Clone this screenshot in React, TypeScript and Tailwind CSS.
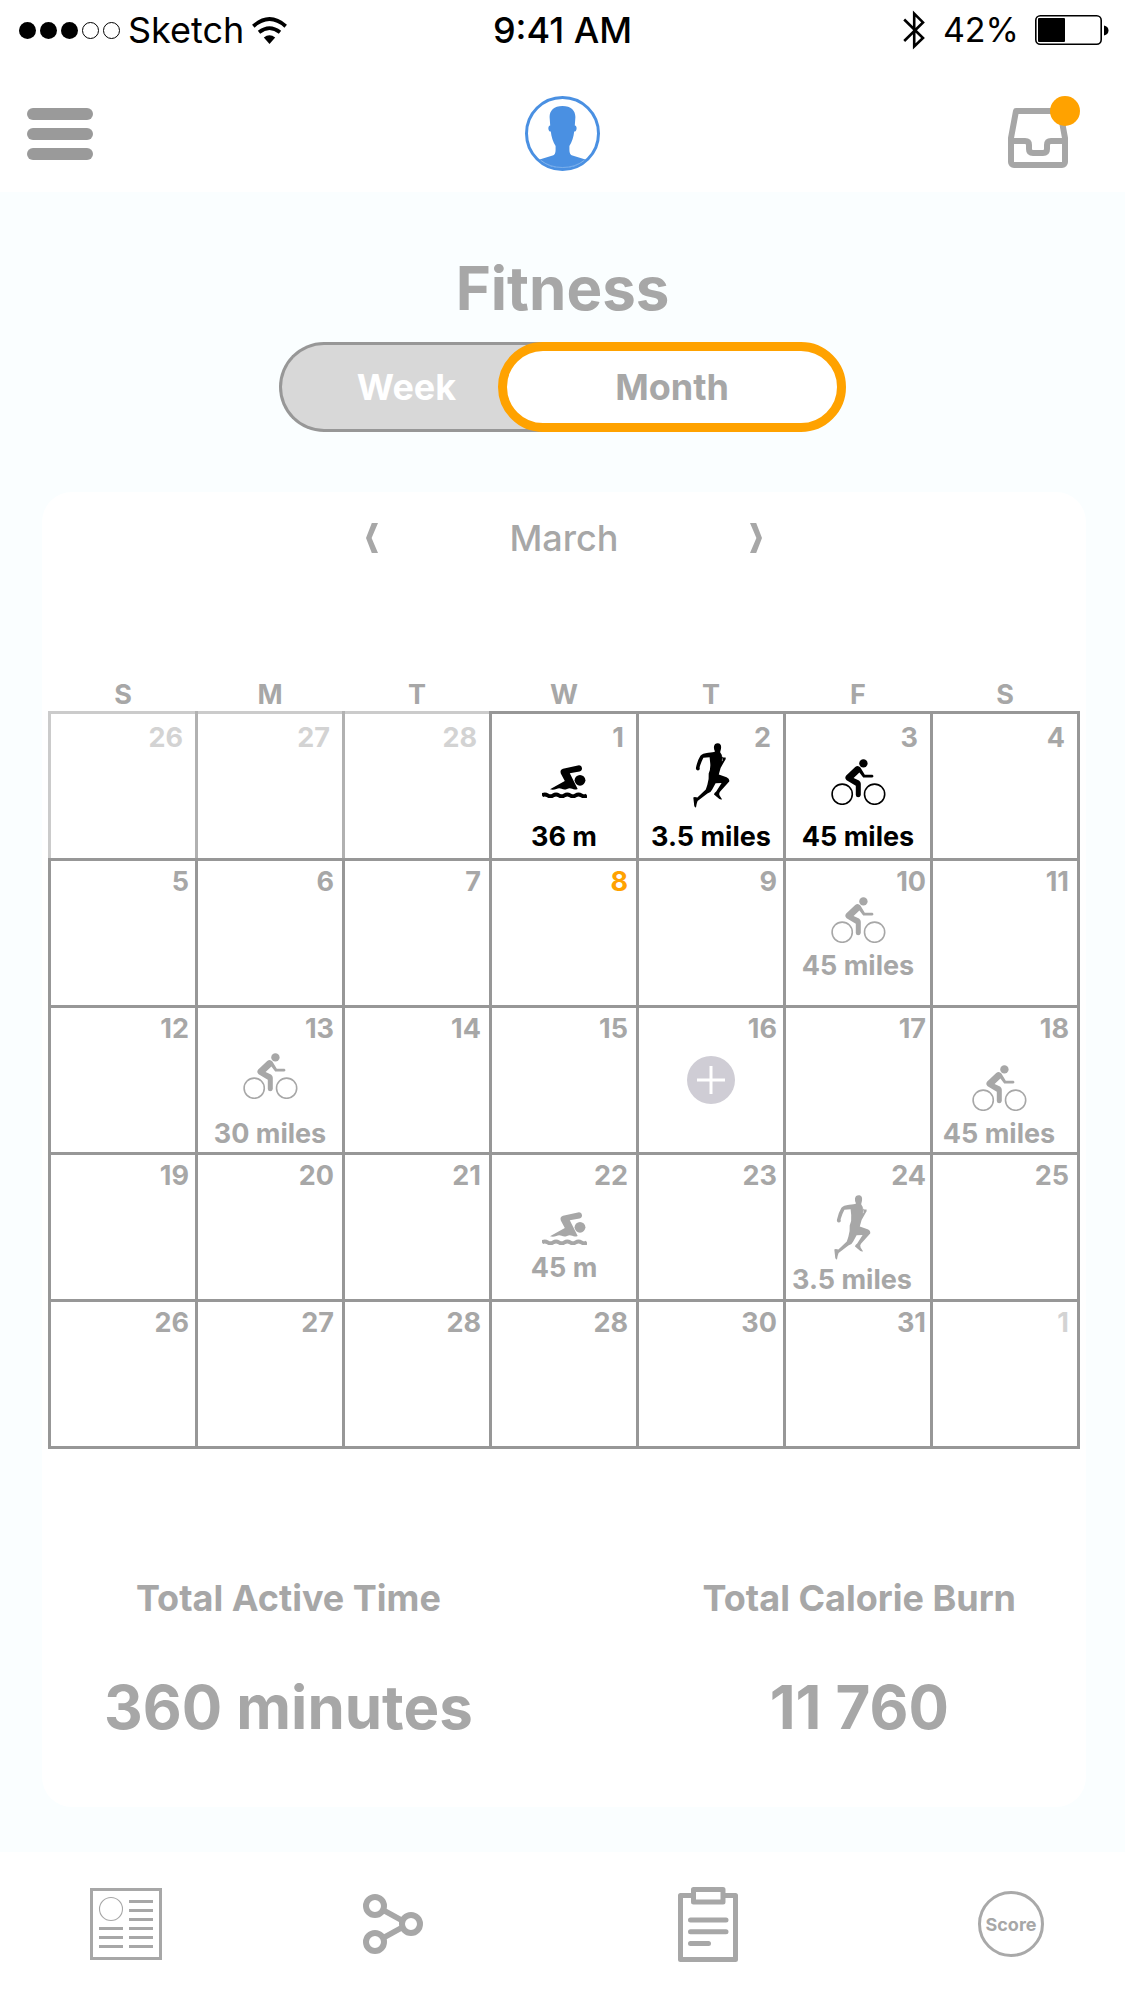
import type { ReactNode } from "react";

type Kind = "swim" | "run" | "bike";

type Activity = {
  kind: Kind;
  label: string;
  /** Space above the icon, between icon and label, and beside them. */
  spacing: string;
  done?: boolean;
};

type Day = {
  day: number;
  outside?: boolean;
  today?: boolean;
  add?: boolean;
  activity?: Activity;
};

const WEEKDAYS: [string, string][] = [
  ["Sunday", "S"],
  ["Monday", "M"],
  ["Tuesday", "T"],
  ["Wednesday", "W"],
  ["Thursday", "T"],
  ["Friday", "F"],
  ["Saturday", "S"],
];

const WEEKS: Day[][] = [
  [
    { day: 26, outside: true },
    { day: 27, outside: true },
    { day: 28, outside: true },
    { day: 1, activity: { kind: "swim", label: "36 m", done: true, spacing: "pt-[51px] gap-[23px]" } },
    { day: 2, activity: { kind: "run", label: "3.5 miles", done: true, spacing: "pt-[29px] gap-[13px]" } },
    { day: 3, activity: { kind: "bike", label: "45 miles", done: true, spacing: "pt-[45px] gap-4" } },
    { day: 4 },
  ],
  [
    { day: 5 },
    { day: 6 },
    { day: 7 },
    { day: 8, today: true },
    { day: 9 },
    { day: 10, activity: { kind: "bike", label: "45 miles", spacing: "pt-9 gap-[7px]" } },
    { day: 11 },
  ],
  [
    { day: 12 },
    { day: 13, activity: { kind: "bike", label: "30 miles", spacing: "pt-[45px] gap-[19px]" } },
    { day: 14 },
    { day: 15 },
    { day: 16, add: true },
    { day: 17 },
    { day: 18, activity: { kind: "bike", label: "45 miles", spacing: "pt-[57px] gap-[7px] pr-3" } },
  ],
  [
    { day: 19 },
    { day: 20 },
    { day: 21 },
    { day: 22, activity: { kind: "swim", label: "45 m", spacing: "pt-[57px] gap-[7px]" } },
    { day: 23 },
    { day: 24, activity: { kind: "run", label: "3.5 miles", spacing: "pt-10 gap-1 pr-3" } },
    { day: 25 },
  ],
  [
    { day: 26 },
    { day: 27 },
    { day: 28 },
    { day: 28 },
    { day: 30 },
    { day: 31 },
    { day: 1, outside: true },
  ],
];

/* Right padding of the day numbers, by column. */
const NUMBER_PADDING = ["pr-1.5", "pr-2", "pr-2", "pr-2", "pr-1.5", "pr-1", "pr-2"];

function SwimIcon() {
  return (
    <svg width="45" height="33" viewBox="0 0 45 33" fill="currentColor" aria-hidden="true">
      <path d="M8 24.2 L22.8 16 L18.8 8.5 Q17.6 4.6 21 3.7 L37 .3 Q39.6 .2 40 3 Q40.2 5.8 37.6 6.4 L27.8 8.2 L35.7 24 Q32.5 25.2 30.2 23.8 Q27.6 22.6 25 24 Q22.2 25.2 19.6 23.8 Q17 22.6 14.4 24 Q11 25.2 8 24.2Z" />
      <circle cx="38" cy="15.3" r="5.4" />
      <path
        d="M0 30.4 q2.8-1.8 5.62 0 q2.8 1.8 5.62 0 q2.8-1.8 5.62 0 q2.8 1.8 5.62 0 q2.8-1.8 5.62 0 q2.8 1.8 5.62 0 q2.8-1.8 5.62 0 q2.8 1.8 5.62 0"
        fill="none"
        stroke="currentColor"
        strokeWidth="4"
      />
    </svg>
  );
}

function RunIcon() {
  return (
    <svg width="37" height="65" viewBox="0 0 37 65" fill="currentColor" aria-hidden="true">
      <path d="M24.6 .3 C28 .3 28.4 3 28 5.6 C27.7 7.6 27 9 27.3 9.6 Q29.2 11.4 29 15.6 L28.9 18.4 L29.6 17.4 L29 13.6 L30.4 14.4 L32.6 14.4 Q33.2 16.2 31.4 18.2 L27.6 25 L25.8 31.6 L33.6 34.2 Q36.8 35.8 36.2 38.4 L27.2 48.6 Q25.6 50.4 26.6 52.4 L29 56.2 Q27 57 24.6 54.4 L21 51.6 Q21 50 23.2 48.4 L28.6 40 L22.6 40.2 L19.2 46.4 Q18 49.4 14.4 50.6 L4.6 58 Q3.4 61 3 64.4 Q1 64.2 1 60.4 L.3 54.4 Q1.4 53.4 4.4 54.4 L12.8 46.4 Q14.6 42 15.6 36 L15.7 30.6 Q17.8 26 17.2 20 L16.6 14.2 L10.4 14.8 Q8.2 19 6.6 24.2 Q7.4 27.4 4.8 27.6 Q2.4 27 3 24.4 Q4.6 17.4 7.4 12.8 Q9.4 10.4 15.2 9.8 Q20.4 9.6 22 8.6 Q20.6 5.6 21 3.4 Q21.6 .3 24.6 .3Z" />
    </svg>
  );
}

function BikeIcon() {
  return (
    <svg width="55" height="46" viewBox="0 0 55 46" fill="currentColor" aria-hidden="true">
      <circle cx="11.2" cy="35.2" r="10.1" fill="none" stroke="currentColor" strokeWidth="1.6" />
      <circle cx="43.6" cy="35.2" r="10.1" fill="none" stroke="currentColor" strokeWidth="1.6" />
      <circle cx="32.4" cy="4.4" r="4.2" />
      <path d="M24.2 8 Q27 5.6 29.4 8.6 L33.8 15.8 H41.4 Q43.6 17.2 41.4 18.6 H32.2 L28.4 13.6 L22.6 19 L28 21.6 Q29.8 22.8 29.8 24.8 V36 Q29.4 38.2 27.2 38.2 Q25 38.2 24.8 36 V26.8 L15.6 21.2 Q13.2 18.8 15.2 16.4Z" />
    </svg>
  );
}

function ActivityIcon({ kind }: { kind: Kind }) {
  if (kind === "swim") return <SwimIcon />;
  if (kind === "run") return <RunIcon />;
  return <BikeIcon />;
}

function StatusBar() {
  return (
    <div className="grid h-[60px] grid-cols-[1fr_auto_1fr] items-center text-[36px] leading-[60px] text-black">
      <div className="flex items-center pl-[19px]">
        <span className="mr-2 flex gap-1" role="img" aria-label="Signal: 3 of 5">
          <span className="size-[17px] rounded-full bg-black" />
          <span className="size-[17px] rounded-full bg-black" />
          <span className="size-[17px] rounded-full bg-black" />
          <span className="size-[17px] rounded-full border border-black" />
          <span className="size-[17px] rounded-full border border-black" />
        </span>
        <span>Sketch</span>
        <svg className="ml-2" width="35" height="27" viewBox="0 0 35 27" fill="none" stroke="currentColor" strokeWidth="3.8" aria-hidden="true">
          <path d="M1.3 9.2 Q17.5 -5 33.7 9.2" />
          <path d="M7 15.2 Q17.5 7 28 15.2" />
          <path d="M11.8 20.6 Q17.5 16 23.2 20.6 L17.5 27Z" fill="currentColor" stroke="none" />
        </svg>
      </div>
      <span className="font-medium">9:41 AM</span>
      <div className="flex items-center justify-end pr-4">
        <svg className="mr-[18px]" width="22" height="40" viewBox="0 0 22 40" fill="none" stroke="currentColor" strokeWidth="2.6" aria-hidden="true">
          <path d="M1.2 9.5 L20 28 L11.2 36.4 V3.6 L20 12.4 L1.2 31" />
        </svg>
        <span className="text-[34px]">42%</span>
        <svg className="ml-4" width="74" height="30" viewBox="0 0 74 30" aria-hidden="true">
          <rect x=".8" y=".8" width="65.4" height="28.4" rx="4.5" fill="none" stroke="currentColor" strokeWidth="1.6" />
          <rect x="3" y="3" width="27" height="24" rx="1" fill="currentColor" />
          <path d="M69 10.5 Q73.5 11.5 73.5 15.5 Q73.5 19.5 69 20.5Z" fill="currentColor" />
        </svg>
      </div>
    </div>
  );
}

function TopBar() {
  return (
    <div className="grid grid-cols-[1fr_auto_1fr] items-center pt-9 pb-[21px]">
      <button type="button" aria-label="Menu" className="ml-[27px] flex w-[66px] flex-col gap-2">
        <span className="h-3 rounded-full bg-[#9a9a9a]" />
        <span className="h-3 rounded-full bg-[#9a9a9a]" />
        <span className="h-3 rounded-full bg-[#9a9a9a]" />
      </button>
      <button type="button" aria-label="Profile">
        <svg width="75" height="75" viewBox="0 0 75 75" aria-hidden="true">
          <circle cx="37.5" cy="37.5" r="36" fill="#fff" stroke="#4a90e2" strokeWidth="3" />
          <path
            d="M37.5 10 C29 10 24.6 14.6 24.6 21 L25.2 29.4 C22.6 29.4 22.8 35.6 25.8 35.6 C26.4 41 28 46 30.6 50 V54 C30.6 57 29.6 59 27.6 59.6 L14.6 63.4 Q24 72.5 37.5 72.5 Q51 72.5 60.4 63.4 L47.4 59.6 C45.4 59 44.4 57 44.4 54 V50 C47 46 48.6 41 49.2 35.6 C52.2 35.6 52.4 29.4 49.8 29.4 L50.4 21 C50.4 14.6 46 10 37.5 10Z"
            fill="#4a90e2"
          />
          <path d="M16 64.5 Q25 71.5 37.5 71.5 Q50 71.5 59 64.5" fill="none" stroke="#8fbbee" strokeWidth=".7" />
        </svg>
      </button>
      <button type="button" aria-label="Inbox, new items" className="mr-[45px] justify-self-end">
        <svg width="72" height="75" viewBox="0 -12 72 75" aria-hidden="true">
          <g fill="none" stroke="#a6a6a6" strokeWidth="6" strokeLinejoin="round">
            <path d="M3 30 L8 3 H52 L57 30 V54 a3 3 0 0 1-3 3 H6 a3 3 0 0 1-3-3Z" />
            <path d="M3 33 H17 q4 0 4 4 v4 q0 4 4 4 h10 q4 0 4-4 v-4 q0-4 4-4 H57" />
          </g>
          <circle cx="57" cy="3" r="15" fill="#ffa200" />
        </svg>
      </button>
    </div>
  );
}

function RangeToggle() {
  return (
    <div className="mx-auto mt-[18px] flex h-[90px] w-[567px] max-w-full text-[36px] font-bold">
      <button
        type="button"
        aria-pressed="false"
        className="w-[270px] rounded-l-full border-[3px] border-r-0 border-[#979797] bg-[#d8d8d8] pr-[18px] text-white"
      >
        Week
      </button>
      <button
        type="button"
        aria-pressed="true"
        className="z-10 -ml-[51px] flex-1 rounded-full border-9 border-[#ffa200] bg-white"
      >
        Month
      </button>
    </div>
  );
}

function MonthPicker() {
  return (
    <div className="mx-auto flex h-12 w-[396px] items-center justify-between text-[36px] font-medium">
      <button type="button" aria-label="Previous month">
        <svg width="12" height="30" viewBox="0 0 12 30" fill="currentColor" aria-hidden="true">
          <path d="M5.8 0 H12 L5.6 15 L12 30 H5.8 L0 15Z" />
        </svg>
      </button>
      <h2>March</h2>
      <button type="button" aria-label="Next month">
        <svg width="12" height="30" viewBox="0 0 12 30" fill="currentColor" aria-hidden="true">
          <path d="M6.2 0 H0 L6.4 15 L0 30 H6.2 L12 15Z" />
        </svg>
      </button>
    </div>
  );
}

function borderFor(week: number, col: number) {
  if (week > 0 || col > 2) return "border-[#979797]";
  const base = "border-t-[#cbcbcb] border-b-[#979797]";
  if (col === 0) return `${base} border-l-[#cbcbcb] border-r-[#b1b1b1]`;
  if (col === 1) return `${base} border-x-[#b1b1b1]`;
  return `${base} border-l-[#b1b1b1] border-r-[#979797]`;
}

function DayCell({ entry, week, col }: { entry: Day; week: number; col: number }) {
  const { day, outside, today, add, activity } = entry;
  const color = today ? "text-[#ffa200]" : outside ? "text-[#d3d3d3]" : "";
  const inset = week === 0 ? "pt-2 pr-3" : `pt-[5px] ${NUMBER_PADDING[col]}`;
  return (
    <td className={`border-[3px] p-0 ${borderFor(week, col)}`}>
      <div className="grid h-36 grid-cols-1">
        <span className={`col-start-1 row-start-1 text-right ${inset} ${color}`}>{day}</span>
        {activity && (
          <div
            className={`col-start-1 row-start-1 flex flex-col items-center whitespace-nowrap ${activity.spacing} ${
              activity.done ? "text-black" : ""
            }`}
          >
            <ActivityIcon kind={activity.kind} />
            <span>{activity.label}</span>
          </div>
        )}
        {add && (
          <button
            type="button"
            aria-label={`Add activity on ${day} March`}
            className="col-start-1 row-start-1 size-12 place-self-center rounded-full bg-[#cfcdd5]"
          >
            <svg width="48" height="48" viewBox="0 0 48 48" stroke="#fff" strokeWidth="3" aria-hidden="true">
              <path d="M10 24 H38 M24 10 V38" />
            </svg>
          </button>
        )}
      </div>
    </td>
  );
}

function Calendar() {
  return (
    <table className="mt-[117px] w-full table-fixed border-collapse text-[27px] leading-8 font-bold">
      <thead>
        <tr>
          {WEEKDAYS.map(([name, letter]) => (
            <th key={name} scope="col" abbr={name} className="h-8 p-0">
              {letter}
            </th>
          ))}
        </tr>
      </thead>
      <tbody>
        {WEEKS.map((days, week) => (
          <tr key={week}>
            {days.map((entry, col) => (
              <DayCell key={col} entry={entry} week={week} col={col} />
            ))}
          </tr>
        ))}
      </tbody>
    </table>
  );
}

function Total({ label, value }: { label: string; value: string }) {
  return (
    <div className="flex flex-col items-center gap-[49px] font-bold">
      <dt className="text-[36px] leading-12">{label}</dt>
      <dd className="text-[60px] leading-[72px]">{value}</dd>
    </div>
  );
}

function NavItem({ label, className, children }: { label: string; className: string; children: ReactNode }) {
  return (
    <a href="#" aria-label={label} className={className}>
      {children}
    </a>
  );
}

function BottomNav() {
  return (
    <nav className="grid h-[150px] grid-cols-[90fr_auto_201fr_auto_255fr_auto_240fr_auto_81fr] items-center bg-white pb-1.5">
      <NavItem label="News" className="col-start-2">
        <svg width="72" height="72" viewBox="0 0 72 72" fill="none" stroke="currentColor" strokeWidth="3" aria-hidden="true">
          <rect x="1.5" y="1.5" width="69" height="69" />
          <circle cx="21" cy="21" r="11.5" strokeWidth="1.1" />
          <path d="M39 13.5 H63 M39 22.5 H63 M39 31.5 H63 M39 40.5 H63 M39 49.5 H63 M39 58.5 H63 M9 40.5 H33 M9 49.5 H33 M9 58.5 H33" />
        </svg>
      </NavItem>
      <NavItem label="Share" className="col-start-4">
        <svg width="60" height="60" viewBox="0 0 60 60" fill="none" stroke="currentColor" strokeWidth="6" aria-hidden="true">
          <circle cx="12" cy="12" r="9" />
          <circle cx="12" cy="48" r="9" />
          <circle cx="48" cy="30" r="9" />
          <path d="M20 16 L40 27 M20 44 L40 33" strokeWidth="5.5" />
        </svg>
      </NavItem>
      <NavItem label="Plan" className="col-start-6">
        <svg width="60" height="75" viewBox="0 0 60 75" fill="none" stroke="currentColor" strokeWidth="5" strokeLinejoin="round" strokeLinecap="round" aria-hidden="true">
          <path d="M15 8.5 H2.5 V72.5 H57.5 V8.5 H46" />
          <rect x="15.5" y="2.5" width="29.5" height="12.5" />
          <path d="M12.5 33 H48 M12.5 44.8 H48 M12.5 56.5 H30.5" />
        </svg>
      </NavItem>
      <a
        href="#"
        className="col-start-8 flex size-[66px] items-center justify-center rounded-full border-[3px] border-[#a9a9a9] text-[18px] font-bold"
      >
        Score
      </a>
    </nav>
  );
}

export default function App() {
  return (
    <div className="min-h-screen bg-white font-['Inter',sans-serif] text-[#a7a7a7]">
      <header>
        <StatusBar />
        <TopBar />
      </header>
      <main className="bg-[#fafeff] pt-[60px] pb-[45px]">
        <h1 className="text-center text-[60px] leading-[72px] font-bold">Fitness</h1>
        <RangeToggle />
        <section className="mt-[60px] mr-[39px] ml-[42px] rounded-[30px] bg-white px-1.5 pt-[22px] pb-16">
          <MonthPicker />
          <Calendar />
          <dl className="mt-[125px] flex justify-between pr-16 pl-14">
            <Total label="Total Active Time" value="360 minutes" />
            <Total label="Total Calorie Burn" value="11 760" />
          </dl>
        </section>
      </main>
      <BottomNav />
    </div>
  );
}
